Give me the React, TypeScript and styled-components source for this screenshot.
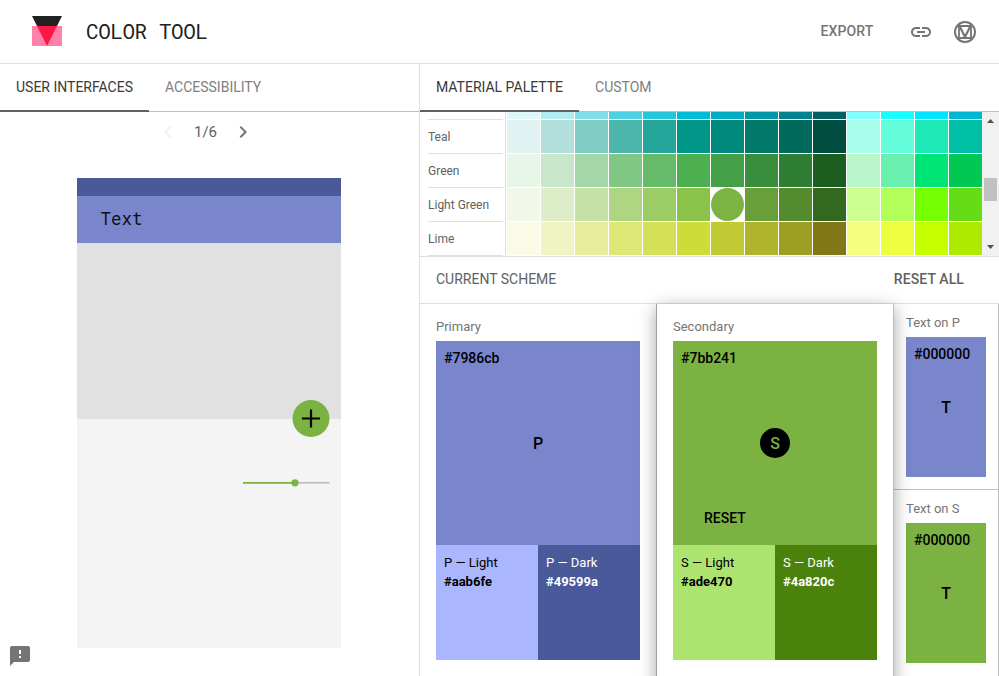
import React from "react";
import styled, { createGlobalStyle } from "styled-components";

const GlobalStyle = createGlobalStyle`
  *, *::before, *::after { box-sizing: border-box; }
  html, body { margin: 0; padding: 0; background: #fff; overflow: hidden; }
  body { font-family: Roboto, "Liberation Sans", sans-serif; font-size: 14px; color: #212121; }
  button { font: inherit; border: 0; padding: 0; background: none; }
`;

const Page = styled.div`
  width: 999px;
  height: 676px;
  display: flex;
  flex-direction: column;
  overflow: hidden;
  background: #fff;
`;

const Header = styled.header`
  height: 64px;
  flex: none;
  display: flex;
  align-items: center;
  padding: 0 22px 0 32px;
  border-bottom: 1px solid #e0e0e0;
`;

const Logo = styled.svg`
  width: 30px;
  height: 30px;
  display: block;
  margin-top: -1px;
`;

const Title = styled.h1`
  margin: -2px auto 0 24px;
  font: 400 21px/24px "Roboto Mono", "Liberation Mono", monospace;
  letter-spacing: -0.45px;
  color: #212121;
`;

const HeaderButton = styled.button`
  font-weight: 500;
  line-height: 20px;
  letter-spacing: 0.15px;
  color: #757575;
  margin-right: 15.5px;
  margin-top: -1px;
`;

const HeaderIcon = styled.svg`
  width: 24px;
  height: 24px;
  display: block;
  margin-left: 20px;
  color: #757575;
`;

const Body = styled.div`
  flex: 1;
  min-height: 0;
  display: flex;
`;

const LeftPane = styled.section`
  width: 420px;
  flex: none;
  display: flex;
  flex-direction: column;
  position: relative;
  border-right: 1px solid #e0e0e0;
`;

const RightPane = styled.section`
  flex: 1;
  min-width: 0;
  display: flex;
  flex-direction: column;
`;

const Tabs = styled.nav`
  height: 48px;
  flex: none;
  display: flex;
  border-bottom: 1px solid #bdbdbd;
`;

const Tab = styled.button<{ $active?: boolean }>`
  height: 48px;
  padding: 0 16px;
  line-height: 46px;
  color: ${(p) => (p.$active ? "#3a3a3a" : "#808080")};
  border-bottom: 2px solid ${(p) => (p.$active ? "#616161" : "transparent")};
`;

const Pager = styled.div`
  height: 40px;
  display: flex;
  align-items: center;
  justify-content: center;
  gap: 13.5px;
  padding-right: 8px;
  font-size: 15px;
  color: #616161;
`;

const Chevron = styled.svg<{ $muted?: boolean }>`
  width: 24px;
  height: 24px;
  color: ${(p) => (p.$muted ? "#f1f1f1" : "#757575")};
`;

const Phone = styled.div`
  position: relative;
  width: 264px;
  height: 470px;
  margin: 26px 0 0 77.4px;
  background: #f4f4f4;
`;

const StatusBar = styled.div`
  height: 18px;
  background: #49599a;
`;

const AppBar = styled.div`
  height: 47px;
  padding-left: 23px;
  background: #7986cb;
  color: #101018;
  font: 400 17.5px/45px "Roboto Mono", "Liberation Mono", monospace;
`;

const Hero = styled.div`
  height: 176px;
  background: #e1e1e1;
`;

const Fab = styled.svg`
  position: absolute;
  left: 215px;
  top: 222px;
  width: 38px;
  height: 38px;
`;

const Slider = styled.svg`
  display: block;
  width: 87px;
  height: 8px;
  margin: 60px 0 0 166px;
`;

const Feedback = styled.svg`
  position: absolute;
  left: 8px;
  bottom: 8px;
  width: 24px;
  height: 24px;
  color: #757575;
`;

const Palette = styled.div`
  height: 145px;
  flex: none;
  display: flex;
  overflow: hidden;
  border-bottom: 1px solid #e0e0e0;
`;

const PaletteNames = styled.div`
  width: 86px;
  flex: none;
  padding: 0 2px 0 8px;
  border-right: 1px solid #e0e0e0;
`;

const PaletteName = styled.div<{ $cut?: boolean }>`
  height: ${(p) => (p.$cut ? 8 : 34)}px;
  border-bottom: 1px solid #e0e0e0;
  font-size: 12px;
  line-height: 34px;
  color: #616161;
`;

const Swatches = styled.div`
  flex: none;
  padding-left: 1px;
  display: grid;
  grid-template-columns: repeat(14, 33px);
  grid-template-rows: 7px repeat(4, 33px);
  gap: 1px;
`;

const Swatch = styled.span<{ $color: string; $selected?: boolean }>`
  background: ${(p) => p.$color};
  border-radius: ${(p) => (p.$selected ? "50%" : "0")};
`;

const ScrollTrack = styled.div`
  width: 17px;
  flex: none;
  display: flex;
  flex-direction: column;
  align-items: center;
  padding: 7px 0 7px;
  background: #f1f1f1;
`;

const ScrollArrow = styled.svg`
  width: 7px;
  height: 4px;
  fill: #505050;
`;

const ScrollThumb = styled.div`
  width: 13px;
  height: 23px;
  margin: 55px 2px auto;
  background: #c1c1c1;
`;

const SchemeHeader = styled.div`
  height: 47px;
  flex: none;
  display: flex;
  justify-content: space-between;
  align-items: flex-start;
  padding: 0 35px 0 16px;
  line-height: 45px;
  color: #616161;
  border-bottom: 1px solid #e0e0e0;
`;

const ResetAll = styled.button`
  font-weight: 500;
  letter-spacing: 0.1px;
  color: #616161;
`;

const Scheme = styled.div`
  flex: 1;
  min-height: 0;
  display: flex;
`;

const Card = styled.article<{ $raised?: boolean }>`
  position: relative;
  z-index: ${(p) => (p.$raised ? 1 : 0)};
  width: ${(p) => (p.$raised ? 238 : 236)}px;
  flex: none;
  padding: 12px 16px 0;
  background: #fff;
  border: solid #bdbdbd;
  border-width: ${(p) => (p.$raised ? "0 1px" : "0")};
  border-left-color: #9e9e9e;
  box-shadow: ${(p) => (p.$raised ? "0 4px 16px rgba(0, 0, 0, 0.36)" : "none")};
  height: 420px;
`;

const CardLabel = styled.div`
  font-size: 13px;
  line-height: 22px;
  height: 25px;
  color: #757575;
`;

const MainColor = styled.div<{ $color: string }>`
  height: 204px;
  padding: 8px;
  display: flex;
  flex-direction: column;
  align-items: center;
  background: ${(p) => p.$color};
  color: #000;
`;

const Hex = styled.div`
  align-self: stretch;
  font-weight: 500;
  line-height: 18px;
`;

const Initial = styled.div<{ $inverted?: string }>`
  width: 30px;
  height: 30px;
  margin-top: 61px;
  border-radius: 50%;
  font-size: 16px;
  font-weight: 500;
  line-height: 32px;
  text-align: center;
  background: ${(p) => (p.$inverted ? "#000" : "transparent")};
  color: ${(p) => p.$inverted || "#000"};
`;

const Reset = styled.button`
  align-self: flex-start;
  margin: 50px 0 0 23px;
  font-weight: 500;
  line-height: 20px;
  color: #000;
`;

const Variants = styled.div`
  display: flex;
`;

const Variant = styled.div<{ $color: string; $text: string }>`
  flex: 1;
  height: 115px;
  padding: 8px;
  font-size: 13px;
  line-height: 19px;
  background: ${(p) => p.$color};
  color: ${(p) => p.$text};
`;

const VariantHex = styled.div`
  font-weight: 700;
`;

const TextColumn = styled.div`
  flex: 1;
  display: flex;
  flex-direction: column;
  border-right: 1px solid #bdbdbd;
`;

const TextCard = styled.div`
  height: 186px;
  flex: none;
  padding: 8px 12px 0;
  & + & { border-top: 1px solid #bdbdbd; margin-top: -1px; }
`;

const TextSample = styled.div<{ $color: string }>`
  height: 140px;
  padding: 8px;
  background: ${(p) => p.$color};
  color: #000;
`;

const Letter = styled.div`
  margin-top: 35px;
  font-size: 16px;
  font-weight: 500;
  line-height: 20px;
  text-align: center;
`;

const ROWS: { name: string; colors: string[] }[] = [
  { name: "Cyan", colors: "#e0f7fa #b2ebf2 #80deea #4dd0e1 #26c6da #00bcd4 #00acc1 #0097a7 #00838f #006064 #84ffff #18ffff #00e5ff #00b8d4".split(" ") },
  { name: "Teal", colors: "#e0f2f1 #b2dfdb #80cbc4 #4db6ac #26a69a #009688 #00897b #00796b #00695c #004d40 #a7ffeb #64ffda #1de9b6 #00bfa5".split(" ") },
  { name: "Green", colors: "#e8f5e9 #c8e6c9 #a5d6a7 #81c784 #66bb6a #4caf50 #43a047 #388e3c #2e7d32 #1b5e20 #b9f6ca #69f0ae #00e676 #00c853".split(" ") },
  { name: "Light Green", colors: "#f1f8e9 #dcedc8 #c5e1a5 #aed581 #9ccc65 #8bc34a #7cb342 #689f38 #558b2f #33691e #ccff90 #b2ff59 #76ff03 #64dd17".split(" ") },
  { name: "Lime", colors: "#f9fbe7 #f0f4c3 #e6ee9c #dce775 #d4e157 #cddc39 #c0ca33 #afb42b #9e9d24 #827717 #f4ff81 #eeff41 #c6ff00 #aeea00".split(" ") },
];

const SELECTED = "#7cb342";
const PRIMARY = "#7986cb";
const SECONDARY = "#7bb241";

export default function App() {
  return (
    <Page>
      <GlobalStyle />
      <Header>
        <Logo viewBox="0 0 30 30">
          <path d="M0 0h30L15 30z" fill="#212121" />
          <path d="M0 10h30v20H0z" fill="#ff80ab" />
          <path d="M5 10h20L15 30z" fill="#ff1744" />
        </Logo>
        <Title>COLOR TOOL</Title>
        <HeaderButton>EXPORT</HeaderButton>
        <HeaderIcon viewBox="0 0 24 24" fill="currentColor">
          <path d="M3.9 12c0-1.710 1.390-3.100 3.100-3.100h4V7H7c-2.760 0-5 2.240-5 5s2.240 5 5 5h4v-1.900H7c-1.710 0-3.100-1.390-3.100-3.100zM8 13h8v-2H8v2zm9-6h-4v1.900h4c1.710 0 3.100 1.390 3.100 3.100s-1.390 3.100-3.100 3.100h-4V17h4c2.760 0 5-2.240 5-5s-2.240-5-5-5z" />
        </HeaderIcon>
        <HeaderIcon viewBox="0 0 24 24" fill="none" stroke="currentColor">
          <circle cx="12" cy="12" r="10" strokeWidth="2" />
          <path d="M6 6h12v12H6z" strokeWidth="1.800" />
          <path d="M6.800 6.500L12 17l5.200-10.500" strokeWidth="2.200" />
        </HeaderIcon>
      </Header>
      <Body>
        <LeftPane>
          <Tabs>
            <Tab $active>USER INTERFACES</Tab>
            <Tab>ACCESSIBILITY</Tab>
          </Tabs>
          <Pager>
            <Chevron $muted viewBox="0 0 24 24" fill="currentColor">
              <path d="M15.410 7.410L14 6l-6 6 6 6 1.410-1.410L10.830 12z" />
            </Chevron>
            <span>1/6</span>
            <Chevron viewBox="0 0 24 24" fill="currentColor">
              <path d="M10 6L8.590 7.410 13.170 12l-4.580 4.590L10 18l6-6z" />
            </Chevron>
          </Pager>
          <Phone>
            <StatusBar />
            <AppBar>Text</AppBar>
            <Hero />
            <Slider viewBox="0 0 87 8">
              <path d="M52 3.800h34.500" stroke="#b9b9b9" strokeWidth="1.500" />
              <path d="M0 3.800h52" stroke={SECONDARY} strokeWidth="1.800" />
              <circle cx="52" cy="3.800" r="3.600" fill={SECONDARY} />
            </Slider>
            <Fab viewBox="0 0 38 38">
              <circle cx="19" cy="18.500" r="18.500" fill={SECONDARY} />
              <path d="M10 18.500h18M19 9.500v18" stroke="#000" strokeWidth="2.200" />
            </Fab>
          </Phone>
          <Feedback viewBox="0 0 24 24" fill="currentColor">
            <path d="M20 2H4c-1.100 0-1.990.9-1.990 2L2 22l4-4h14c1.100 0 2-.9 2-2V4c0-1.100-.9-2-2-2zm-7 12h-2v-2h2v2zm0-4h-2V6h2v4z" />
          </Feedback>
        </LeftPane>
        <RightPane>
          <Tabs>
            <Tab $active>MATERIAL PALETTE</Tab>
            <Tab>CUSTOM</Tab>
          </Tabs>
          <Palette>
            <PaletteNames>
              {ROWS.map((row, i) => (
                <PaletteName key={row.name} $cut={i === 0}>{i === 0 ? null : row.name}</PaletteName>
              ))}
            </PaletteNames>
            <Swatches>
              {ROWS.flatMap((row) =>
                row.colors.map((c) => <Swatch key={row.name + c} $color={c} $selected={c === SELECTED} />)
              )}
            </Swatches>
            <ScrollTrack>
              <ScrollArrow viewBox="0 0 7 4"><path d="M0 4L3.500 0 7 4z" /></ScrollArrow>
              <ScrollThumb />
              <ScrollArrow viewBox="0 0 7 4"><path d="M0 0L3.500 4 7 0z" /></ScrollArrow>
            </ScrollTrack>
          </Palette>
          <SchemeHeader>
            <span>CURRENT SCHEME</span>
            <ResetAll>RESET ALL</ResetAll>
          </SchemeHeader>
          <Scheme>
            <Card>
              <CardLabel>Primary</CardLabel>
              <MainColor $color={PRIMARY}>
                <Hex>#7986cb</Hex>
                <Initial>P</Initial>
              </MainColor>
              <Variants>
                <Variant $color="#aab6fe" $text="#000">P — Light<VariantHex>#aab6fe</VariantHex></Variant>
                <Variant $color="#49599a" $text="#fff">P — Dark<VariantHex>#49599a</VariantHex></Variant>
              </Variants>
            </Card>
            <Card $raised>
              <CardLabel>Secondary</CardLabel>
              <MainColor $color={SECONDARY}>
                <Hex>#7bb241</Hex>
                <Initial $inverted={SECONDARY}>S</Initial>
                <Reset>RESET</Reset>
              </MainColor>
              <Variants>
                <Variant $color="#ade470" $text="#000">S — Light<VariantHex>#ade470</VariantHex></Variant>
                <Variant $color="#4a820c" $text="#fff">S — Dark<VariantHex>#4a820c</VariantHex></Variant>
              </Variants>
            </Card>
            <TextColumn>
              <TextCard>
                <CardLabel>Text on P</CardLabel>
                <TextSample $color={PRIMARY}>
                  <Hex>#000000</Hex>
                  <Letter>T</Letter>
                </TextSample>
              </TextCard>
              <TextCard>
                <CardLabel>Text on S</CardLabel>
                <TextSample $color={SECONDARY}>
                  <Hex>#000000</Hex>
                  <Letter>T</Letter>
                </TextSample>
              </TextCard>
            </TextColumn>
          </Scheme>
        </RightPane>
      </Body>
    </Page>
  );
}
